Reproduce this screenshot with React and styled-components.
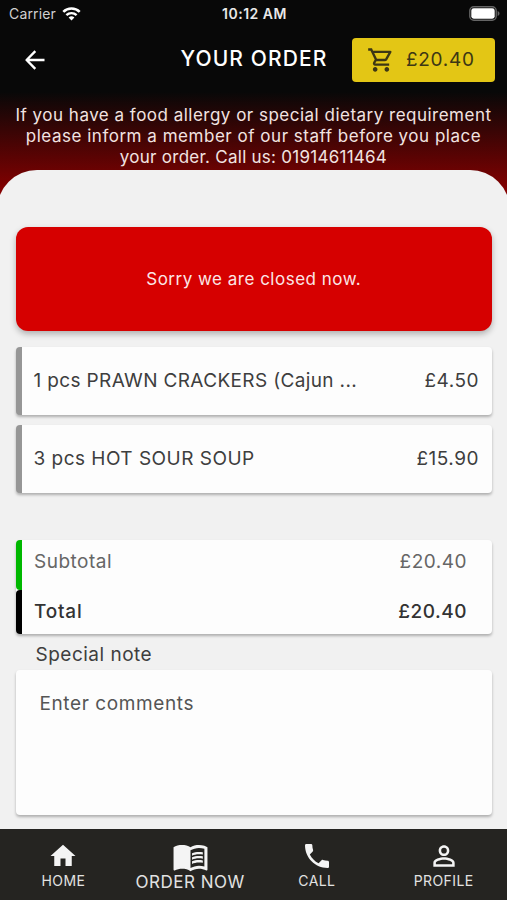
import React from "react";
import styled, { createGlobalStyle } from "styled-components";
import {
  MdHome,
  MdMenuBook,
  MdOutlineShoppingCart,
  MdPersonOutline,
  MdPhone
} from "react-icons/md";

const items = [
  { name: "1 pcs PRAWN CRACKERS (Cajun ...", price: "£4.50", spacing: 0.36 },
  { name: "3 pcs HOT SOUR SOUP", price: "£15.90", spacing: 0.48 }
];

const tabs = [
  { label: "HOME", icon: MdHome, size: 30 },
  { label: "ORDER NOW", icon: MdMenuBook, size: 37, active: true },
  { label: "CALL", icon: MdPhone, size: 32 },
  { label: "PROFILE", icon: MdPersonOutline, size: 32 }
];

const App = () => {
  return (
    <Screen>
      <GlobalStyle />
      <StatusBar>
        <Carrier>
          Carrier
          <svg width="19" height="14" viewBox="0 0 19 14" fill="none">
            <path d="M1.3 4.9a11.6 11.6 0 0 1 16.4 0" stroke="#fff" strokeWidth="2.6" />
            <path d="M4.4 8.2a7.2 7.2 0 0 1 10.2 0" stroke="#fff" strokeWidth="2.4" />
            <path d="M9.5 13.6 6.6 10.6a4.1 4.1 0 0 1 5.8 0z" fill="#fff" />
          </svg>
        </Carrier>
        <Clock>10:12 AM</Clock>
        <Battery>
          <svg width="31" height="15" viewBox="0 0 31 15" fill="none">
            <rect x="0.8" y="0.8" width="26.4" height="13.4" rx="4" stroke="#656565" strokeWidth="1.4" />
            <rect x="2.3" y="2.3" width="23.4" height="10.4" rx="2.4" fill="#fff" />
            <path d="M28.6 5c1.3.5 1.9 1.4 1.9 2.5s-.6 2-1.9 2.5z" fill="#656565" />
          </svg>
        </Battery>
      </StatusBar>
      <Header>
        <BackButton aria-label="Back">
          <svg width="20" height="20" viewBox="0 0 20 20" fill="none">
            <path
              d="M19.5 10H1.8M10.3 1.2 1.6 10l8.7 8.8"
              stroke="#fff"
              strokeWidth="2.4"
              strokeLinejoin="round"
            />
          </svg>
        </BackButton>
        <Title>YOUR ORDER</Title>
        <CartButton>
          <MdOutlineShoppingCart size={28} />
          <span>£20.40</span>
        </CartButton>
      </Header>
      <Notice>
        <NoticeLine $spacing={0.49}>
          If you have a food allergy or special dietary requirement
        </NoticeLine>
        <NoticeLine $spacing={0.52}>
          please inform a member of our staff before you place
        </NoticeLine>
        <NoticeLine $spacing={0.26}>your order. Call us: 01914611464</NoticeLine>
      </Notice>
      <Sheet>
        <ClosedAlert>Sorry we are closed now.</ClosedAlert>
        <ItemList>
          {items.map(item => (
            <ItemCard key={item.name}>
              <ItemName $spacing={item.spacing}>{item.name}</ItemName>
              <ItemPrice>{item.price}</ItemPrice>
            </ItemCard>
          ))}
        </ItemList>
        <Totals>
          <TotalRow $height={50} $bar="#00b800" $color="#666">
            <span>Subtotal</span>
            <TotalAmount>£20.40</TotalAmount>
          </TotalRow>
          <TotalRow $height={44} $bar="#000" $color="#333" $strong>
            <span>Total</span>
            <TotalAmount>£20.40</TotalAmount>
          </TotalRow>
        </Totals>
        <NoteLabel>Special note</NoteLabel>
        <Comments>Enter comments</Comments>
      </Sheet>
      <TabBar>
        {tabs.map(tab => (
          <Tab key={tab.label}>
            <TabIcon>
              <tab.icon size={tab.size} />
            </TabIcon>
            <TabLabel $active={tab.active}>{tab.label}</TabLabel>
          </Tab>
        ))}
      </TabBar>
    </Screen>
  );
};

export default App;

const GlobalStyle = createGlobalStyle`
  * {
    box-sizing: border-box;
  }

  body {
    margin: 0;
    background: #252421;
  }
`;

const Screen = styled.div`
  display: flex;
  flex-direction: column;
  width: 507px;
  height: 900px;
  overflow: hidden;
  background: linear-gradient(#080808 0, #080808 92px, #8b0000 196px);
  font-family: Inter, sans-serif;
  white-space: nowrap;
`;

const StatusBar = styled.div`
  display: grid;
  grid-template-columns: 1fr auto 1fr;
  align-items: center;
  height: 27px;
  padding: 0 7px 0 9px;
  color: #fff;
`;

const Carrier = styled.div`
  display: flex;
  align-items: center;
  gap: 6px;
  color: #d0d0d0;
  font-size: 14px;
  letter-spacing: 0.15px;
`;

const Clock = styled.div`
  color: #e8e8e8;
  font-size: 14px;
  font-weight: 600;
  letter-spacing: 0.5px;
`;

const Battery = styled.div`
  display: flex;
  justify-content: flex-end;
`;

const Header = styled.header`
  display: grid;
  grid-template-columns: 1fr auto 1fr;
  align-items: center;
  height: 65px;
  padding: 0 12px;
`;

const BackButton = styled.button`
  display: flex;
  margin-left: 13px;
  padding: 0;
  border: 0;
  background: none;
`;

const Title = styled.h1`
  margin: 0;
  padding: 0 0 2px 1px;
  color: #fff;
  font-size: 21px;
  font-weight: 500;
  letter-spacing: 1.1px;
`;

const CartButton = styled.button`
  display: flex;
  justify-self: end;
  align-items: center;
  gap: 11px;
  width: 143px;
  height: 44px;
  padding: 0 0 0 15px;
  border: 0;
  border-radius: 4px;
  background: #e3c615;
  color: #3d3714;
  font-family: inherit;
  font-size: 19px;
  letter-spacing: 0.7px;
`;

const Notice = styled.div`
  display: flex;
  flex-direction: column;
  align-items: center;
  height: 78px;
  padding-top: 13px;
`;

const NoticeLine = styled.p`
  margin: 0;
  color: #f2e3e1;
  font-size: 17px;
  line-height: 21px;
  letter-spacing: ${props => props.$spacing}px;
`;

const Sheet = styled.main`
  display: flex;
  flex: 1;
  flex-direction: column;
  margin: 0 -3px;
  padding: 57px 18px 0 18.5px;
  border-radius: 40px 40px 0 0;
  background: #f1f1f1;
`;

const ClosedAlert = styled.div`
  display: flex;
  justify-content: center;
  align-items: center;
  height: 104px;
  border-radius: 12px;
  background: #d60000;
  box-shadow: 0 3px 6px rgba(0, 0, 0, 0.28);
  color: #fbe6e6;
  font-size: 17px;
  letter-spacing: 0.5px;
`;

const ItemList = styled.div`
  display: flex;
  flex-direction: column;
  gap: 10px;
  margin: 16px 0 47px;
`;

const ItemCard = styled.div`
  display: flex;
  justify-content: space-between;
  align-items: center;
  height: 68px;
  padding: 0 13px 2px 12px;
  border-left: 6px solid #969696;
  border-radius: 4px;
  background: #fdfdfd;
  box-shadow: 0 2px 3px rgba(0, 0, 0, 0.28);
  color: #3e3e3e;
  font-size: 19px;
`;

const ItemName = styled.span`
  letter-spacing: ${props => props.$spacing}px;
`;

const ItemPrice = styled.span`
  letter-spacing: 0.5px;
`;

const Totals = styled.div`
  border-radius: 4px;
  background: #fdfdfd;
  box-shadow: 0 2px 3px rgba(0, 0, 0, 0.28);
`;

const TotalRow = styled.div`
  display: flex;
  justify-content: space-between;
  height: ${props => props.$height}px;
  padding: 10px 25px 0 12.5px;
  border-left: 6px solid ${props => props.$bar};
  border-radius: 4px;
  color: ${props => props.$color};
  font-size: 19px;
  font-weight: ${props => (props.$strong ? 500 : 400)};
  line-height: 23px;
  letter-spacing: ${props => (props.$strong ? 0.8 : 0.5)}px;
`;

const TotalAmount = styled.span`
  letter-spacing: 0.5px;
`;

const NoteLabel = styled.label`
  height: 36px;
  padding-left: 20px;
  color: #3e3e3e;
  font-size: 19px;
  line-height: 41px;
  letter-spacing: 0.5px;
`;

const Comments = styled.div`
  height: 145px;
  padding: 22px 24px;
  border-radius: 4px;
  background: #fdfdfd;
  box-shadow: 0 2px 3px rgba(0, 0, 0, 0.28);
  color: #555;
  font-size: 19px;
  line-height: 23px;
  letter-spacing: 0.6px;
`;

const TabBar = styled.nav`
  display: grid;
  flex: none;
  grid-template-columns: repeat(4, 1fr);
  height: 71px;
  background: #252421;
`;

const Tab = styled.div`
  display: flex;
  flex-direction: column;
  align-items: center;
  padding-top: 8px;
  color: #f4f4f4;
`;

const TabIcon = styled.div`
  display: flex;
  justify-content: center;
  align-items: center;
  height: 38px;
`;

const TabLabel = styled.span`
  color: #e2e2e2;
  font-size: ${props => (props.$active ? 17 : 14)}px;
  line-height: ${props => (props.$active ? 14 : 11)}px;
  letter-spacing: ${props => (props.$active ? 0.5 : 0.4)}px;
`;
